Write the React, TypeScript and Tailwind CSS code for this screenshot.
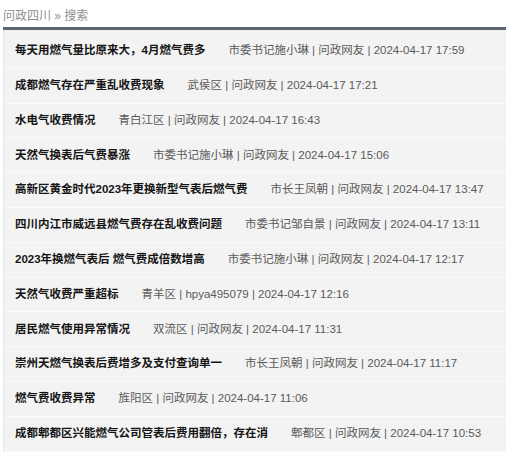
import React from "react";

const rows: [string, string][] = [
  ["每天用燃气量比原来大，4月燃气费多", "市委书记施小琳 | 问政网友 | 2024-04-17 17:59"],
  ["成都燃气存在严重乱收费现象", "武侯区 | 问政网友 | 2024-04-17 17:21"],
  ["水电气收费情况", "青白江区 | 问政网友 | 2024-04-17 16:43"],
  ["天然气换表后气费暴涨", "市委书记施小琳 | 问政网友 | 2024-04-17 15:06"],
  ["高新区黄金时代2023年更换新型气表后燃气费", "市长王凤朝 | 问政网友 | 2024-04-17 13:47"],
  ["四川内江市威远县燃气费存在乱收费问题", "市委书记邹自景 | 问政网友 | 2024-04-17 13:11"],
  ["2023年换燃气表后 燃气费成倍数增高", "市委书记施小琳 | 问政网友 | 2024-04-17 12:17"],
  ["天然气收费严重超标", "青羊区 | hpya495079 | 2024-04-17 12:16"],
  ["居民燃气使用异常情况", "双流区 | 问政网友 | 2024-04-17 11:31"],
  ["崇州天燃气换表后费增多及支付查询单一", "市长王凤朝 | 问政网友 | 2024-04-17 11:17"],
  ["燃气费收费异常", "旌阳区 | 问政网友 | 2024-04-17 11:06"],
  ["成都郫都区兴能燃气公司管表后费用翻倍，存在消", "郫都区 | 问政网友 | 2024-04-17 10:53"],
];

export default function App() {
  return (
    <div
      className="w-[506px] h-[453px] overflow-hidden bg-white"
      style={{ fontFamily: '"Liberation Sans", "Noto Sans CJK SC", sans-serif' }}
    >
      {/* Breadcrumb */}
      <div className="h-[27px] pl-[3px] pt-[6px] text-[12px] leading-[20px] text-[#8e8e8e]">
        问政四川 » 搜索
      </div>
      <div className="ml-[3px] h-[3px] bg-[#5b6670]" />

      {/* Result list */}
      <div className="ml-[3px] bg-[#f3f3f3] pt-[4px] border-l border-[#e6e6e6]">
        {rows.map(([title, meta], i) => (
          <div
            key={i}
            className="h-[34.8px] flex items-center pl-[11px] border-b border-[#fbfbfb] whitespace-nowrap"
          >
            <span className="text-[11.5px] font-bold text-[#151515]">{title}</span>
            <span className="ml-[23px] text-[11.5px] text-[#5a5a5a]">{meta}</span>
          </div>
        ))}
      </div>
    </div>
  );
}
